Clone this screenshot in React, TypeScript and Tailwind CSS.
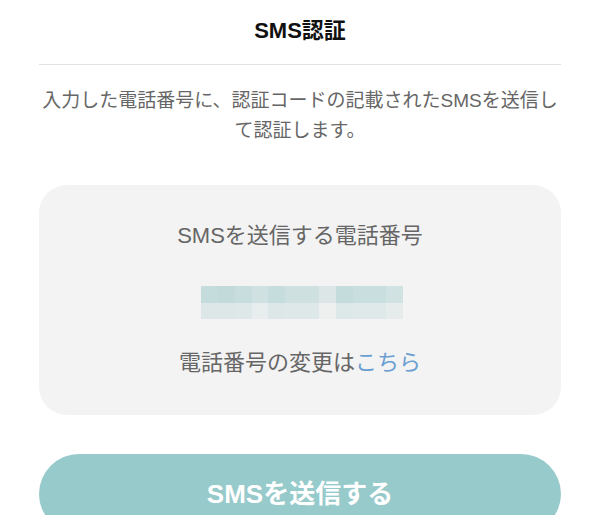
const font = { fontFamily: '"Liberation Sans", "Noto Sans CJK JP", sans-serif' };

const topRow = [
  "bg-[#c5dcdc]", "bg-[#c3dada]", "bg-[#c8dddd]", "bg-[#d0e1e2]",
  "bg-[#c6dddd]", "bg-[#cfe0e1]", "bg-[#cfe0e1]", "bg-[#dce6e6]",
  "bg-[#c5dcdc]", "bg-[#c9dedf]", "bg-[#c9dedf]", "bg-[#d1e2e3]",
];
const bottomRow = [
  "bg-[#dde7e7]", "bg-[#dde7e7]", "bg-[#dfe8e8]", "bg-[#e8eded]",
  "bg-[#dde7e7]", "bg-[#dfe8e8]", "bg-[#dfe8e8]", "bg-[#eef0f0]",
  "bg-[#dde8e8]", "bg-[#e0e9e9]", "bg-[#e0e9e9]", "bg-[#e6ebeb]",
];

function BlurredNumber() {
  return (
    <div className="grid w-[202px] grid-cols-12">
      {topRow.map((c, i) => (
        <div key={"t" + i} className={`h-[17px] ${c}`} />
      ))}
      {bottomRow.map((c, i) => (
        <div key={"b" + i} className={`h-[16px] ${c}`} />
      ))}
    </div>
  );
}

export default function App() {
  return (
    <div className="min-h-[515px] bg-white px-[39px]" style={font}>
      <div className="flex h-[65px] items-center justify-center border-b border-[#e2e2e2] pb-[4px]">
        <h1 className="text-[22px] font-bold text-[#111]">SMS認証</h1>
      </div>

      <p className="mt-[21px] text-center text-[19px] leading-[30px] text-[#666]">
        入力した電話番号に、認証コードの記載されたSMSを送信して認証します。
      </p>

      <div className="mt-[39px] flex h-[230px] flex-col items-center rounded-[28px] bg-[#f3f3f3] pt-[35px]">
        <p className="text-[22px] leading-[32px] text-[#666]">SMSを送信する電話番号</p>
        <div className="mt-[34px] ml-[4px]">
          <BlurredNumber />
        </div>
        <p className="mt-[28px] text-[22px] leading-[32px] text-[#666]">
          電話番号の変更は<a href="#" className="text-[#6b9fd2]">こちら</a>
        </p>
      </div>

      <button
        type="button"
        className="mt-[39px] flex h-[80px] w-full items-center justify-center rounded-full bg-[#97cacb] text-[26px] font-bold text-white"
      >
        SMSを送信する
      </button>
    </div>
  );
}
